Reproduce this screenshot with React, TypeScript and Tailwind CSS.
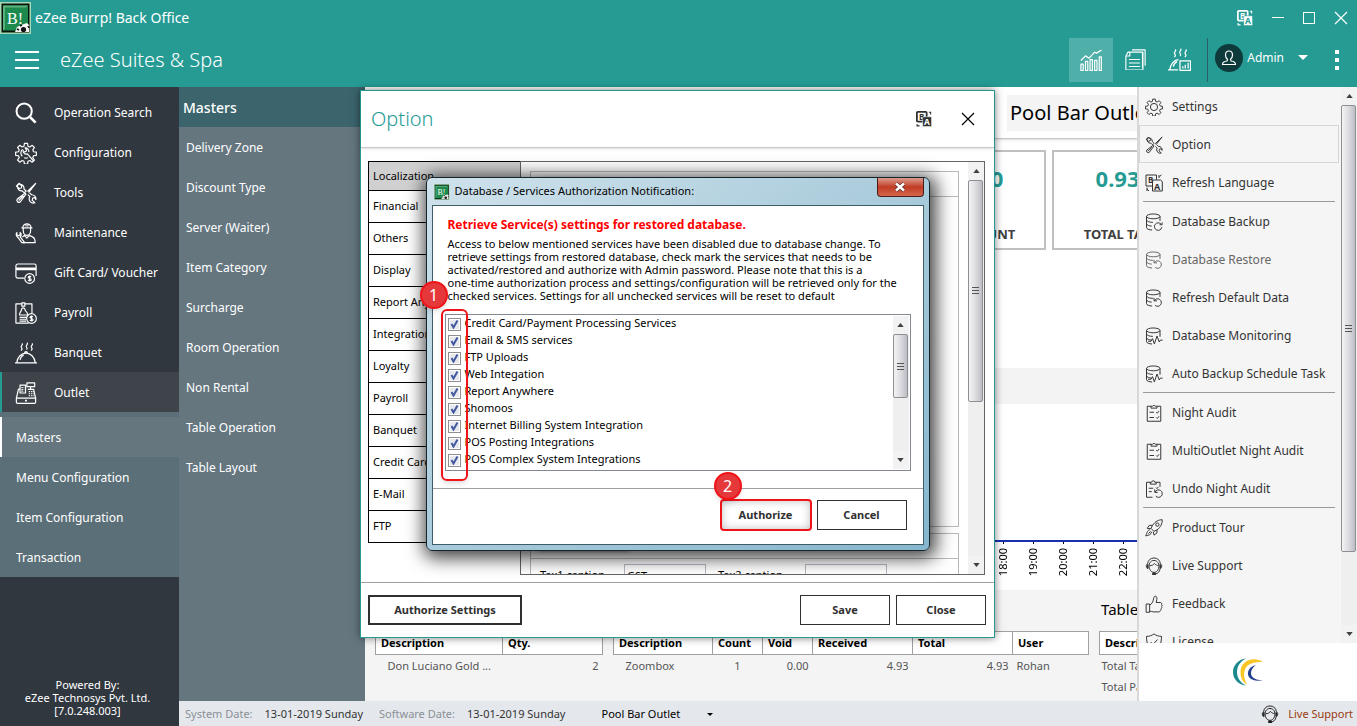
import type { ReactNode } from "react"

interface IconProps {
  name: string
  className?: string
}

const gearTeeth =
  "M10.3 1.5h3.4l.5 3.1 2 .8 2.6-1.8 2.4 2.4-1.8 2.6.8 2 3.1.5v3.4l-3.1.5-.8 2 1.8 2.6-2.4 2.4-2.6-1.8-2 .8-.5 3.1h-3.4l-.5-3.1-2-.8-2.6 1.8-2.4-2.4 1.8-2.6-.8-2-3.1-.5v-3.4l3.1-.5.8-2-1.8-2.6 2.4-2.4 2.6 1.8 2-.8z"

const database = (
  <>
    <ellipse cx="11" cy="4.5" rx="9" ry="3.2" />
    <path d="M2 4.5v15c0 1.8 3.6 3 7.5 3.2M20 4.5v6M2 9.5c.6 1.8 4.5 3 8.5 3M2 14.5c.6 1.8 3.5 2.8 7 3" />
  </>
)

const dollar = (cx: number, cy: number) => (
  <>
    <circle cx={cx} cy={cy} r="5.3" />
    <path
      d={`M${cx + 1.6} ${cy - 1.6}c-.6-1-3.2-1-3.2.3 0 1.5 3.3 1 3.3 2.6 0 1.4-2.7 1.5-3.4.2M${cx} ${cy - 3.2}v6.4`}
    />
  </>
)

const clipboard = <path d="M8 3H3v20h18V3h-5M8 5.5h8V3h-2.2a2 2 0 0 0-3.6 0H8z" />

const toolsDrawing = (
  <>
    <path d="M22.8 1.2 13.6 10.4M22.8 1.2l-8 10.4M11 12.2l-8.5 6.4a2.3 2.3 0 0 0 3.2 3.2L12 13.2zM4 20.2l5.2-5.2" />
    <path d="M4.5 1.4a4.6 4.6 0 0 0 3.4 8.2l2.2 2.2 2-2-2.3-2.2A4.6 4.6 0 0 0 1.5 4.4l3 2.6 2.4-.5.4-2.3z" />
    <path d="M14 13.8l2.2 2.2a4.6 4.6 0 0 0 5.5 6.7l-2.9-2.8.5-2.4 2.3-.5 1.2 2.2a4.6 4.6 0 0 0-4.8-5.3L16 11.8" />
  </>
)

const headset = (
  <>
    <path d="M3.2 15.5C1 13 1.3 9.8 3.5 9 4 4 7.500 1.300 12 1.300S20 4 20.500 9c2.200.8 2.500 4 .3 6.500" />
    <path d="M6 15.500C4 9 7.500 4.600 12 4.600s8 4.400 6 10.900c-1 3.300-3.500 5-6 5s-5-1.700-6-5z" />
    <path d="M6 11.500c3 .3 5.500-1 6.500-3 1.500 2 3.500 2.800 5.500 2.900M20 16c-.5 4-3 6.200-6.500 6.600" />
    <path d="M10.500 21.600h3.200v1.700h-3.200zM3.700 9.500v6M20.300 9.500v6" strokeWidth="2" />
  </>
)

const steam = (
  <path d="M7.500 1.500c2.200 1.500-2.400 3-.4 4.800 1 1 .6 2.200-.6 3M13 .8c2.200 1.500-2.400 3-.4 4.800.8.9.8 1.900 0 2.700M18.500 1.500c2.200 1.500-2.400 3-.4 4.800 1 1 .6 2.200-.6 3" />
)

const drawings: Record<string, ReactNode> = {
  search: <path d="M16.500 16.500 22.500 22.500" strokeWidth="3" />,
  configuration: (
    <>
      <path d={gearTeeth} />
      <path d="M9 8.500a3.600 3.600 0 0 0 4.500 4.500l7 8M15 11a3.600 3.600 0 0 0-4-4.500l1.600 2-.6 1.800-2 .4M8 15.500a5 5 0 0 1 .2-7.500M14 17.200a5.500 5.500 0 0 1-4 0" />
    </>
  ),
  settings: (
    <>
      <path d={gearTeeth} />
      <circle cx="12" cy="12" r="4.800" />
    </>
  ),
  tools: toolsDrawing,
  maintenance: (
    <>
      <path d="M8.500 6.500a4.500 4.500 0 0 1 9 0M7 6.500h12M9 6.500v3c0 2.500 1.500 5 4 5s4-2.500 4-5v-3M12 2v3M14 2v3" />
      <path d="M10.500 14.500 8 16.500M15.500 14.500l4 2c2 1 2.500 3 2.500 6H8M10.500 14.500l2.500 3 2.500-3" />
      <path d="M2 11.500v2.500l1.800 1 1.800-1v-2.500c1.800 1.500 1.300 3.800 0 4.700l5 6.300H7.500l-4.500-6C1.300 15.600.8 13 2 11.500z" />
    </>
  ),
  card: (
    <>
      <path d="M10 17.500H3a2 2 0 0 1-2-2V4.200a2 2 0 0 1 2-2h18a2 2 0 0 1 2 2v11" />
      <path d="M1 7.500h22" strokeWidth="3" />
      {dollar(16, 18)}
    </>
  ),
  payroll: (
    <>
      <path d="M7 2H1v21h14M11 2h7.500v10M7.500 1h3.200v3.500H7.500zM9 6.500a2 2 0 0 1 2 2.200c0 1.500 3 2 3 5.500H5c0-3.500 2-4 2-5.500a2 2 0 0 1 2-2.200z" />
      <path d="M5 16.800h8M5 18.800h7M5 20.800h7" />
      {dollar(18, 18)}
    </>
  ),
  banquet: (
    <>
      {steam}
      <path d="M0 22.800h24M2 22.500c.4-5.500 4.600-10.300 10-10.300s9.600 4.800 10 10.300M10.500 12c0-2 3-2 3 0M5.500 19.500c.5-2.500 2-4.500 4-5.300" />
    </>
  ),
  outlet: (
    <>
      <path d="M1.500 17.500h21V22a1.300 1.300 0 0 1-1.300 1.300H2.800A1.300 1.300 0 0 1 1.500 22zM1.500 17.500l2.300-9.800H5M22.500 17.500l-2.300-9.800M5.500 3.500h6v8.500h-6zM13 1h8.500v4H13zM17 5v2.500M14 8h7" />
      <path d="M7 6h3M7 8h3M7 10h3M15 10.500h6M15 12.800h6M15 15h6" strokeDasharray="1.500 1" />
      <path d="M11 20.400h2" strokeWidth="2" />
    </>
  ),
  backup: (
    <>
      {database}
      <path d="M21.500 15a5 5 0 1 0 1 4M22.800 12.500v3.200h-3.400" />
    </>
  ),
  restore: (
    <>
      {database}
      <path d="M12.500 15.500a5 5 0 1 1 1 6.300M12 11.800v4h4" />
    </>
  ),
  monitoring: (
    <>
      {database}
      <path d="M4 19h4l2-3.500 2.500 7 3.500-10.500 3 8 1.500-2.500h3M20 10v3" />
    </>
  ),
  audit: (
    <>
      {clipboard}
      <path d="M6 11h6M6 18h6M15 11l1.300 1.300 2.500-3M15 18l1.300 1.300 2.500-3" />
    </>
  ),
  undo: (
    <>
      <path d="M7 3H2v20h8M15 3h5v6M7 5.500h8V3h-2a2 2 0 0 0-4 0H7zM5 11h6M5 15.500h4M14.500 10l1.500 1.500 2-2.500" />
      <path d="M13.500 16a5 5 0 1 1 .8 5.500M13 12.500v4h4" />
    </>
  ),
  rocket: (
    <>
      <path d="M23 1c-5 0-9 2-13 7.500l-2 4 4 4 4-2C21 11 23 6 23 1zM10 8.500H5.500L3 12.500l5 .5M16 14.500v4L12 21.500l-1-4.500" />
      <circle cx="16.500" cy="7.500" r="2.200" />
      <path d="M6.500 14.500c-3 0-3.500 3-5.500 8 4-1 7.500-1.500 7.800-5.500M4.500 19.500l3-3" />
    </>
  ),
  support: headset,
  thumb: (
    <path d="M1.500 12h4.700v11H1.500zM6.200 13.500c3.500-2 4.600-5 5.200-8.300.3-2.200 1-3.700 2.300-3.700 1.700 0 2.500 2 2 4.500l-.8 4h5.600c1.400 0 2.200 1.300 1.700 2.600.8.700.8 2 0 2.900.5 1 .1 2.100-.7 2.700.3 1-.2 2-1.100 2.400 0 1.200-.8 1.900-2 1.900h-7c-2.300 0-3.300-1-5.200-1" />
  ),
  license: <path d="M12 1.200c3 2.300 6 3.200 10 3.300 0 9-2 15-10 18.700C4 19.500 2 13.500 2 4.500c4-.1 7-1 10-3.300zM7.500 12l3.200 3.200 6-6.500" />,
  chart: (
    <path d="M1 23.500v-7h2.500v7zM6 23.500v-10h2.500v10zM11 23.500v-12h2.500v12zM16 23.500v-11h2.500v11zM21 23.500v-15h2.300v15zM1 12.500l5-5 4 2.500 6-6.500 2 1L23.500 1" />
  ),
  reports: <path d="M6 3.500h14V21M8 1h15v18M3.500 3.500H20.500V24H1V8zM5.500 3.500V8H1M4.500 12h12.500M4.500 16h12.500M4.500 20h12.500" />,
  dining: (
    <>
      {steam}
      <path d="M0 22.800h10.500M2 22.500c.4-5.500 4.600-10.300 9-10.300M5.500 19.500c.5-2.500 2-4.500 4-5.300M12.500 13.500h11v9.800h-11zM15.500 21.500v-2.500M18 21.500v-4M21 21.500v-6" />
    </>
  ),
}

function Icon({ name, className = "size-6" }: IconProps) {
  return (
    <svg
      viewBox="0 0 24 24"
      className={`shrink-0 ${className}`}
      fill="none"
      stroke="currentColor"
      strokeWidth="1.3"
      strokeLinejoin="round"
      aria-hidden="true"
    >
      {name === "search" && <circle cx="10" cy="10" r="8.300" strokeWidth="2.200" />}
      {drawings[name]}
    </svg>
  )
}

function TranslateIcon({ front, back, className = "size-4" }: { front: string; back: string; className?: string }) {
  return (
    <svg viewBox="0 0 18 18" className={`shrink-0 ${className}`} aria-hidden="true">
      <rect x="1" y="1" width="11" height="11" rx="1" fill={back} stroke={front} strokeWidth="2" />
      <text x="3.500" y="10" fontSize="9" fontWeight="700" fontFamily="Noto Sans, sans-serif" fill={front}>
        B
      </text>
      <rect x="7.500" y="6.500" width="10" height="11" rx="1" fill={front} stroke={back} strokeWidth=".6" />
      <text x="9" y="15.500" fontSize="9.500" fontWeight="700" fontFamily="Noto Sans, sans-serif" fill={back}>
        A
      </text>
      <path d="M14.500 1.500h2V4M1.200 14.500v2.200H4" fill="none" stroke={front} strokeWidth="1.200" />
    </svg>
  )
}

function LanguageOutlineIcon() {
  return (
    <svg viewBox="0 0 18 18" className="size-[18px] shrink-0" fill="none" stroke="currentColor" aria-hidden="true">
      <path d="M7 12H1V1h10.500v4.500M7.500 6h8l1.800 1.500V17h-9.800zM14 1v3M16.500 1l-2 1.500M2 15l2 2M2 13.500V17" />
      <text x="3" y="9" fontSize="8" fontWeight="700" fontFamily="Noto Sans, sans-serif" fill="currentColor" stroke="none">
        B
      </text>
      <text x="9" y="15.500" fontSize="9" fontWeight="700" fontFamily="Noto Sans, sans-serif" fill="currentColor" stroke="none">
        A
      </text>
    </svg>
  )
}

function AppLogo({ className }: { className: string }) {
  return (
    <svg viewBox="0 0 32 32" className={`shrink-0 ${className}`} aria-hidden="true">
      <rect width="31" height="32" fill="#a9d8b4" />
      <rect x="1.500" y="1.500" width="28" height="29" fill="#06140c" />
      <rect x="3" y="3.500" width="25" height="25" fill="#1d8a4d" />
      <path d="M3 3.500h25l-2 2H5v21l-2 2z" fill="#5fb07f" />
      <text x="7" y="21.500" fontSize="16" fontFamily="Liberation Serif, serif" fill="#fff">
        B!
      </text>
      <path d="M15 30l2-5 4-2 3-1 3-1 2 2v7z" fill="#f5f5f5" />
      <circle cx="23.500" cy="27.500" r="2.600" fill="#111" />
      <path d="M17 27l2 1M28 24l1 2M20 24l2-1" stroke="#111" strokeWidth="1.500" />
    </svg>
  )
}

function CloseIcon({ className }: { className: string }) {
  return (
    <svg viewBox="0 0 14 14" className={className} stroke="currentColor" strokeWidth="1.200" aria-hidden="true">
      <path d="M1 1l12 12M13 1 1 13" />
    </svg>
  )
}

function ScrollArrow({ down = false }: { down?: boolean }) {
  return (
    <span className="flex h-[18px] shrink-0 items-center justify-center bg-[#f2f2f2]">
      <svg viewBox="0 0 8 5" className="h-1 w-[7px]" aria-hidden="true">
        <path d={down ? "M0 0h8L4 5z" : "M0 5h8L4 0z"} fill="#404040" />
      </svg>
    </span>
  )
}

// thumbClass sets how much of the track the thumb takes
function Scrollbar({ thumbClass }: { thumbClass: string }) {
  return (
    <div className="flex w-4 shrink-0 flex-col bg-[#efefef]" aria-hidden="true">
      <ScrollArrow />
      <div className="min-h-0 flex-1">
        <div
          className={`flex w-[15px] flex-col items-center justify-center gap-0.5 rounded-xs border border-[#8f8f93] bg-linear-to-r from-[#f4f4f5] via-[#dcdce0] to-[#bdbdc5] ${thumbClass}`}
        >
          <span className="h-px w-[7px] bg-[#555]" />
          <span className="h-px w-[7px] bg-[#555]" />
          <span className="h-px w-[7px] bg-[#555]" />
        </div>
      </div>
      <ScrollArrow down />
    </div>
  )
}

const mainMenu = [
  { label: "Operation Search", icon: "search" },
  { label: "Configuration", icon: "configuration" },
  { label: "Tools", icon: "tools" },
  { label: "Maintenance", icon: "maintenance" },
  { label: "Gift Card/ Voucher", icon: "card" },
  { label: "Payroll", icon: "payroll" },
  { label: "Banquet", icon: "banquet" },
  { label: "Outlet", icon: "outlet" },
]

const outletMenu = ["Masters", "Menu Configuration", "Item Configuration", "Transaction"]

const mastersMenu = [
  "Delivery Zone",
  "Discount Type",
  "Server (Waiter)",
  "Item Category",
  "Surcharge",
  "Room Operation",
  "Non Rental",
  "Table Operation",
  "Table Layout",
]

const drawerGroups = [
  [
    { label: "Settings", icon: "settings" },
    { label: "Option", icon: "tools" },
    { label: "Refresh Language", icon: "language" },
  ],
  [
    { label: "Database Backup", icon: "backup" },
    { label: "Database Restore", icon: "restore" },
    { label: "Refresh Default Data", icon: "restore" },
    { label: "Database Monitoring", icon: "monitoring" },
    { label: "Auto Backup Schedule Task", icon: "monitoring" },
  ],
  [
    { label: "Night Audit", icon: "audit" },
    { label: "MultiOutlet Night Audit", icon: "audit" },
    { label: "Undo Night Audit", icon: "undo" },
  ],
  [
    { label: "Product Tour", icon: "rocket" },
    { label: "Live Support", icon: "support" },
    { label: "Feedback", icon: "thumb" },
    { label: "License", icon: "license" },
  ],
]

const optionTabs = [
  "Localization",
  "Financial",
  "Others",
  "Display",
  "Report Anywhere",
  "Integration",
  "Loyalty",
  "Payroll",
  "Banquet",
  "Credit Card",
  "E-Mail",
  "FTP",
]

const services = [
  "Credit Card/Payment Processing Services",
  "Email & SMS services",
  "FTP Uploads",
  "Web Integation",
  "Report Anywhere",
  "Shomoos",
  "Internet Billing System Integration",
  "POS Posting Integrations",
  "POS Complex System Integrations",
]

const hours = Array.from({ length: 24 }, (_, i) => `${String(i).padStart(2, "0")}:00`)

function Header() {
  return (
    <header className="flex h-[87px] shrink-0 flex-col bg-[#259b94] text-white">
      <div className="flex h-[35px] items-center">
        <AppLogo className="size-8" />
        <span className="ml-[3px] text-sm">eZee Burrp! Back Office</span>
        <div className="ml-auto flex items-center gap-[19px] pr-[9px]">
          <button aria-label="Language">
            <TranslateIcon front="#fff" back="#259b94" />
          </button>
          <button aria-label="Minimize" className="h-px w-3 bg-white" />
          <button aria-label="Maximize" className="size-3 border border-white" />
          <button aria-label="Close">
            <CloseIcon className="size-[14px]" />
          </button>
        </div>
      </div>
      <div className="flex flex-1 items-center pb-[3px]">
        <button aria-label="Menu" className="ml-[15px] flex w-6 flex-col gap-[6px]">
          <span className="h-0.5 bg-white" />
          <span className="h-0.5 bg-white" />
          <span className="h-0.5 bg-white" />
        </button>
        <h1 className="ml-[21px] text-xl font-light">eZee Suites &amp; Spa</h1>
        <div className="ml-auto flex items-center">
          <button aria-label="Dashboard" className="flex size-11 items-center justify-center bg-[#4fafa9]">
            <Icon name="chart" className="size-[22px]" />
          </button>
          <button aria-label="Reports" className="flex size-11 items-center justify-center">
            <Icon name="reports" className="size-[21px]" />
          </button>
          <button aria-label="Dining" className="flex size-11 items-center justify-center">
            <Icon name="dining" className="size-[23px]" />
          </button>
          <span className="ml-[6px] h-11 w-px bg-[#2b5f68]" />
          <button className="mb-1 ml-[7px] flex items-center text-xs">
            <span className="flex size-7 items-center justify-center rounded-full bg-[#0f3a3b]">
              <svg viewBox="0 0 16 16" className="size-4" fill="none" stroke="#fff" strokeWidth="1.200">
                <path d="M8 1C5.600 1 4.500 2.800 4.500 5c0 1.800.8 3.600 2 4.300L6 11c-3 .3-4.500 1.300-4.500 3.500h13c0-2.200-1.500-3.200-4.500-3.500l-.5-1.700c1.200-.7 2-2.500 2-4.300 0-2.200-1.100-4-3.500-4z" />
              </svg>
            </span>
            <span className="ml-1">Admin</span>
            <svg viewBox="0 0 10 5" className="ml-[14px] h-[5px] w-[10px]" fill="#fff">
              <path d="M0 0h10L5 5z" />
            </svg>
          </button>
          <button aria-label="More" className="mr-[18px] ml-[27px] flex flex-col gap-1">
            <span className="size-1 bg-white" />
            <span className="size-1 bg-white" />
            <span className="size-1 bg-white" />
          </button>
        </div>
      </div>
    </header>
  )
}

function Sidebar() {
  return (
    <nav className="flex w-[179px] shrink-0 flex-col bg-[#31373f] pt-[5px] text-xs text-white">
      {mainMenu.map((item) => (
        <a
          key={item.label}
          href="#"
          className={`flex h-10 shrink-0 items-center gap-[17px] border-l-2 pt-0.5 pl-[13px] ${
            item.label === "Outlet" ? "border-[#259b94] bg-[#3e444a]" : "border-transparent"
          }`}
        >
          <Icon name={item.icon} className="size-[22px]" />
          {item.label}
        </a>
      ))}
      <div className="bg-[#5b6f78] pt-[5px]">
        {outletMenu.map((label) => (
          <a
            key={label}
            href="#"
            className={`flex h-10 items-center border-l-2 pt-0.5 pl-[14px] ${
              label === "Masters" ? "border-white bg-[#65767f]" : "border-transparent"
            }`}
          >
            {label}
          </a>
        ))}
      </div>
      <p className="mt-auto pr-1 pb-[9px] text-center text-[11px] leading-[13px]">
        Powered By:
        <br />
        eZee Technosys Pvt. Ltd.
        <br />
        [7.0.248.003]
      </p>
    </nav>
  )
}

function Submenu() {
  return (
    <nav className="w-[186px] shrink-0 bg-[#65767f] text-xs text-white">
      <h2 className="flex h-10 items-center bg-[#3b646d] pt-0.5 pl-1 text-sm font-medium">Masters</h2>
      {mastersMenu.map((label) => (
        <a key={label} href="#" className="flex h-10 items-center pt-0.5 pl-[7px]">
          {label}
        </a>
      ))}
    </nav>
  )
}

function Card({ value, label, className }: { value: string; label: string; className: string }) {
  return (
    <div className={`flex h-[100px] flex-col items-center justify-between border-2 border-[#c0c0c0] pt-[10px] pb-1 ${className}`}>
      <span className="text-[22px] font-bold text-[#259b94]">{value}</span>
      <span className="text-[13px] font-bold text-[#404040]">{label}</span>
    </div>
  )
}

const headCell = "h-[23px] border border-[#a0a0a0] bg-white px-[5px] text-left font-bold text-black"

function Dashboard() {
  return (
    <main className="flex min-w-0 flex-1 flex-col overflow-hidden bg-white">
      <div className="flex h-[52px] shrink-0 items-center justify-end border-b border-[#c8c8c8] shadow-sm">
        <h2 className="h-9 w-[350px] bg-[#f4f4f4] pl-[3px] text-xl leading-9">Pool Bar Outlet</h2>
      </div>
      <div className="mt-[11px] grid shrink-0 grid-cols-7 gap-[6px] pr-[38px] pl-[6px]">
        <Card className="col-start-5" value="0.00" label="DISCOUNT" />
        <Card className="col-start-6" value="0.93" label="TOTAL TAX" />
      </div>
      <div className="mt-[118px] h-9 shrink-0 bg-[#f3f3f3]" />
      <div className="flex min-h-0 flex-1 flex-col justify-end">
        <div className="border-t-2 border-[#1a2eb0]" />
        <div className="flex h-12 pl-[83px] text-[11px]">
          {hours.map((hour) => (
            <div key={hour} className="flex w-[30px] shrink-0 flex-col items-center">
              <span className="h-[2px] w-px bg-black" />
              <span className="mt-1 rotate-180 leading-4 [writing-mode:vertical-rl]">{hour}</span>
            </div>
          ))}
        </div>
      </div>
      <div className="flex h-[111px] shrink-0 items-start gap-[10px] bg-[#f4f4f4] pl-[10px] text-[11px] text-[#555]">
        <table className="mt-[41px] w-[228px] shrink-0 table-fixed border-collapse">
          <thead>
            <tr>
              <th className={`${headCell} w-[127px]`}>Description</th>
              <th className={headCell}>Qty.</th>
            </tr>
          </thead>
          <tbody>
            <tr>
              <td className="h-[22px] pl-3">Don Luciano Gold ...</td>
              <td className="pr-1 text-right">2</td>
            </tr>
          </tbody>
        </table>
        <table className="mt-[41px] w-[476px] shrink-0 table-fixed border-collapse">
          <thead>
            <tr>
              <th className={`${headCell} w-[99px]`}>Description</th>
              <th className={`${headCell} w-[50px]`}>Count</th>
              <th className={`${headCell} w-[50px]`}>Void</th>
              <th className={`${headCell} w-[100px]`}>Received</th>
              <th className={`${headCell} w-[100px]`}>Total</th>
              <th className={headCell}>User</th>
            </tr>
          </thead>
          <tbody>
            <tr>
              <td className="h-[22px] pl-3">Zoombox</td>
              <td className="text-center">1</td>
              <td className="pr-1 text-right">0.00</td>
              <td className="pr-1 text-right">4.93</td>
              <td className="pr-1 text-right">4.93</td>
              <td className="pl-1">Rohan</td>
            </tr>
          </tbody>
        </table>
        <section className="w-[240px] shrink-0">
          <h3 className="h-[41px] pl-[2px] text-[15px] leading-[38px] text-black">Table Status</h3>
          <table className="w-full border-collapse">
            <thead>
              <tr>
                <th className={headCell}>Description</th>
              </tr>
            </thead>
            <tbody>
              <tr>
                <td className="h-[22px] pl-[2px]">Total Tables</td>
              </tr>
              <tr>
                <td className="h-[22px] pl-[2px]">Total Pax</td>
              </tr>
            </tbody>
          </table>
        </section>
      </div>
    </main>
  )
}

function Drawer() {
  return (
    <aside className="absolute inset-y-0 right-0 z-30 flex w-[220px] flex-col border-l-2 border-[#d8d8d8] bg-white">
      <div className="flex min-h-0 flex-1 bg-[#f5f5f5]">
        <ul className="min-w-0 flex-1 overflow-hidden pr-[2px] text-xs text-[#333]">
          {drawerGroups.map((group, index) => (
            <li key={group[0].label}>
              {index > 0 && <hr className="mr-1 ml-1 border-[#999]" />}
              <ul>
                {group.map((item) => (
                  <li key={item.label}>
                    <a
                      href="#"
                      className={`flex h-[38px] items-center gap-[9px] border pt-0.5 pl-[5px] whitespace-nowrap ${
                        item.label === "Option" ? "border-[#d5d5d5]" : "border-transparent"
                      } ${item.label === "Database Restore" ? "text-[#666]" : ""}`}
                    >
                      {item.icon === "language" ? (
                        <LanguageOutlineIcon />
                      ) : (
                        <Icon name={item.icon} className="size-[18px]" />
                      )}
                      {item.label}
                    </a>
                  </li>
                ))}
              </ul>
            </li>
          ))}
        </ul>
        <Scrollbar thumbClass="h-[86%]" />
      </div>
      <div className="flex h-[58px] shrink-0 items-center justify-center">
        <svg viewBox="0 0 32 28" className="h-7 w-8" aria-hidden="true">
          <path d="M14 .5C6 1.500 1 7.500 1 14c0 7 5 12.500 13 13.500C8 24.500 5 19.500 5 14S8 3.500 14 .5z" fill="#1c8a8c" />
          <path d="M31 4C27 1.200 22 .8 18 1.800 12 3.500 8.500 8.500 8.500 14c0 5.500 2 10 6.500 12.500-2.300-4-3.300-8-2.800-12.200C13 7.500 19 3.200 31 4z" fill="#f7c524" />
          <path d="M24 7c-6 1.500-8.500 5.500-8 9.500.7 4.500 6.500 7.500 15 5.500-6.500.3-11-1.800-11.800-5.500C18.500 12.800 20.500 9.500 24 7z" fill="#23408e" />
        </svg>
      </div>
    </aside>
  )
}

function StatusBar() {
  return (
    <footer className="flex h-[25px] shrink-0 items-center bg-[#e4e8ec] pt-px pl-[6px] text-[11px] text-[#8a9096]">
      <span>System Date:</span>
      <span className="ml-3 text-[#333]">13-01-2019 Sunday</span>
      <span className="ml-4">Software Date:</span>
      <span className="ml-3 text-[#333]">13-01-2019 Sunday</span>
      <label className="relative ml-9 flex items-center text-black">
        <select aria-label="Outlet" className="w-28 appearance-none">
          <option>Pool Bar Outlet</option>
        </select>
        <svg viewBox="0 0 6 3" className="pointer-events-none absolute right-0 h-[3px] w-[6px]">
          <path d="M0 0h6L3 3z" />
        </svg>
      </label>
      <a href="#" className="mr-1 ml-auto flex items-center gap-[9px] text-[#993a10]">
        <Icon name="support" className="size-[18px] text-[#222]" />
        Live Support
      </a>
    </footer>
  )
}

const dialogButton = "h-[30px] w-[90px] border border-[#303030] bg-white text-[11px] font-bold text-[#303030]"

function OptionDialog() {
  return (
    <section
      role="dialog"
      aria-labelledby="option-title"
      className="flex h-[548px] w-[635px] flex-col border border-[#259b94] bg-white shadow-[0_0_8px_rgba(0,0,0,0.5)]"
    >
      <div className="flex h-[57px] shrink-0 items-center border-b border-[#c8c8c8] pr-[19px] pl-[10px] shadow-sm">
        <h2 id="option-title" className="text-xl font-light text-[#259b94]">
          Option
        </h2>
        <button aria-label="Language" className="mr-[29px] ml-auto">
          <TranslateIcon front="#303030" back="#fff" />
        </button>
        <button aria-label="Close option">
          <CloseIcon className="size-[14px]" />
        </button>
      </div>
      <div className="flex min-h-0 flex-1 items-start pt-[13px] pr-[9px] pb-[7px] pl-[7px] text-[11px]">
        <ul className="w-[153px] shrink-0 border border-black">
          {optionTabs.map((tab) => (
            <li key={tab} className="border-t border-black first:border-t-0">
              <button className={tab === "Localization" ? "h-7 w-full bg-[#d0d0d0] pl-1 text-left" : "h-[31px] w-full pl-1 text-left"}>
                {tab}
              </button>
            </li>
          ))}
        </ul>
        <div className="-ml-px flex h-full min-w-0 flex-1 border border-[#646464]">
          <div className="min-w-0 flex-1 overflow-hidden px-[9px] pt-[9px]">
            <div className="h-[356px] border border-[#b8b8b8]">
              <div className="h-[25px] border-b border-[#b8b8b8] px-2 pt-2">
                <div className="h-2 w-[60px] bg-black/40 blur-[3px]" />
              </div>
            </div>
            <div className="mt-[6px] h-20 border border-[#b8b8b8]">
              <div className="h-[25px] border-b border-[#b8b8b8] px-2 pt-2">
                <div className="h-2 w-[90px] bg-black/70 blur-[2px]" />
              </div>
              <div className="flex items-center pt-[5px] pl-[9px]">
                <label htmlFor="tax1" className="w-[84px]">
                  Tax1 caption
                </label>
                <input id="tax1" defaultValue="GST" className="h-[22px] w-[82px] border border-[#b8b8c4] pl-[2px]" />
                <label htmlFor="tax2" className="ml-3 w-[87px]">
                  Tax2 caption
                </label>
                <input id="tax2" className="h-[22px] w-[82px] border border-[#b8b8c4] pl-[2px]" />
              </div>
            </div>
          </div>
          <Scrollbar thumbClass="h-[59%]" />
        </div>
      </div>
      <div className="flex h-[55px] shrink-0 items-center gap-[6px] border-t border-[#a0a0a0] pr-2 pl-[7px]">
        <button className="mr-auto h-[30px] w-[154px] border-2 border-[#303030] text-[11px] font-bold text-[#303030]">
          Authorize Settings
        </button>
        <button className={dialogButton}>Save</button>
        <button className={dialogButton}>Close</button>
      </div>
    </section>
  )
}

function Marker({ value, className }: { value: number; className: string }) {
  return (
    <span
      className={`absolute flex size-7 items-center justify-center rounded-full border-2 border-[#f01418] bg-[#e5383b] text-base text-white shadow-md ${className}`}
    >
      {value}
    </span>
  )
}

function AuthorizationDialog() {
  return (
    <section
      role="dialog"
      aria-labelledby="authorization-title"
      className="relative flex h-[374px] w-[504px] flex-col rounded-md border border-[#16242c] bg-linear-to-br from-[#cfe2ec] via-[#a9cbdb] to-[#86b6cd] px-[5px] pb-[5px] shadow-[2px_3px_18px_4px_rgba(0,0,0,0.75)]"
    >
      <div className="flex h-[27px] shrink-0 items-center rounded-t-md pl-[2px]">
        <AppLogo className="size-4" />
        <h2 id="authorization-title" className="ml-[5px] text-[11px]">
          Database / Services Authorization Notification:
        </h2>
        <button
          aria-label="Close notification"
          className="mb-2 ml-auto flex h-[19px] w-[47px] items-center justify-center rounded-b-sm border border-t-0 border-[#4a1d18] bg-linear-to-b from-[#dd9a8e] via-[#c03a22] to-[#d4674c]"
        >
          <svg viewBox="0 0 12 10" className="h-[10px] w-3">
            <path d="M2 1.500l8 7M10 1.500l-8 7" stroke="#5a3030" strokeWidth="4" />
            <path d="M2 1.500l8 7M10 1.500l-8 7" stroke="#fff" strokeWidth="2.500" />
          </svg>
        </button>
      </div>
      <div className="relative flex min-h-0 flex-1 flex-col border border-[#3f5c68] bg-white">
        <div className="flex min-h-0 flex-1 flex-col pr-3 pb-[17px] pl-3">
          <h3 className="mt-[11px] pl-[3px] text-xs leading-4 font-bold text-[#f00]">
            Retrieve Service(s) settings for restored database.
          </h3>
          <p className="mt-1 pl-[3px] text-[11px] leading-[13px] whitespace-nowrap">
            Access to below mentioned services have been disabled due to database change. To
            <br />
            retrieve settings from restored database, check mark the services that needs to be
            <br />
            activated/restored and authorize with Admin password. Please note that this is a
            <br />
            one-time authorization process and settings/configuration will be retrieved only for the
            <br />
            checked services. Settings for all unchecked services will be reset to default
          </p>
          <div className="mt-3 flex min-h-0 flex-1 border border-[#828790] p-px">
            <ul className="flex-1 overflow-hidden pl-px text-[11px]">
              {services.map((service) => (
                <li key={service}>
                  <label className="flex h-[17px] items-start gap-1 leading-[14px]">
                    <span className="relative mt-[2px] flex size-[13px]">
                      <input
                        type="checkbox"
                        defaultChecked
                        className="peer size-[13px] appearance-none border border-[#8e8f8f] bg-[#e6e8ee] shadow-[inset_0_0_0_1px_#fff]"
                      />
                      <svg
                        viewBox="0 0 13 13"
                        className="pointer-events-none absolute inset-0 hidden size-[13px] peer-checked:block"
                        fill="none"
                        stroke="#4058a0"
                        strokeWidth="2"
                      >
                        <path d="M3.500 6l2 3.500L9.500 2.500" />
                      </svg>
                    </span>
                    {service}
                  </label>
                </li>
              ))}
            </ul>
            <Scrollbar thumbClass="h-[55%]" />
          </div>
        </div>
        <div className="flex h-14 shrink-0 items-center justify-end gap-[5px] border-t border-[#a0a0a0] pr-4 pb-[3px]">
          <button className="h-8 w-[92px] rounded-sm border-2 border-[#f01418] bg-white text-[11px] font-bold text-[#303030] shadow-[inset_0_0_8px_rgba(0,0,0,0.25)]">
            Authorize
          </button>
          <button className={dialogButton}>Cancel</button>
        </div>
        <div className="pointer-events-none absolute top-[103px] left-2 h-[172px] w-[27px] rounded-md border-2 border-[#f01418] shadow-md" />
        <Marker value={1} className="top-[75px] left-[-13px]" />
        <Marker value={2} className="bottom-11 left-[281px]" />
      </div>
    </section>
  )
}

export default function App() {
  return (
    <div className="relative flex h-screen flex-col overflow-hidden font-['Noto_Sans',sans-serif] text-black">
      <Header />
      <div className="flex min-h-0 flex-1">
        <Sidebar />
        <div className="flex min-w-0 flex-1 flex-col">
          <div className="relative flex min-h-0 flex-1">
            <Submenu />
            <Dashboard />
            <Drawer />
          </div>
          <StatusBar />
        </div>
      </div>
      <div className="absolute inset-0 z-10 flex items-center justify-center pt-0.5 pr-0.5">
        <OptionDialog />
      </div>
      <div className="absolute inset-0 z-20 flex items-center justify-center pt-0.5 pr-0.5">
        <AuthorizationDialog />
      </div>
    </div>
  )
}
